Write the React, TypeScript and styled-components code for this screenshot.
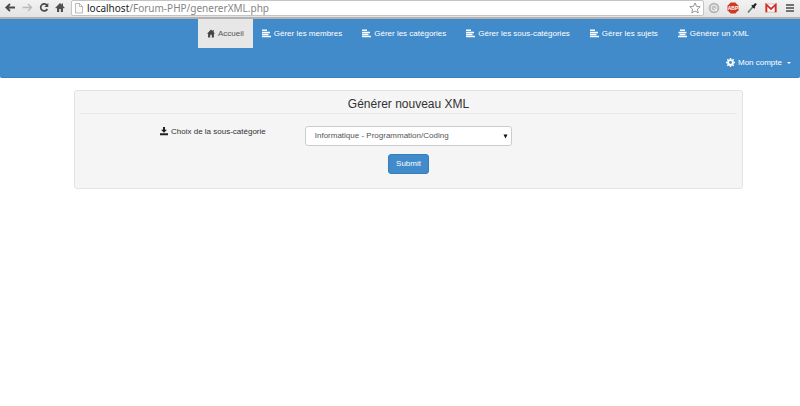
import React from "react";
import styled, { createGlobalStyle } from "styled-components";

const GlobalStyle = createGlobalStyle`
  * { box-sizing: border-box; }
  body {
    margin: 0;
    background: #fff;
    color: #333;
    font: 8px/12px "Liberation Sans", Arial, sans-serif;
  }
  svg { display: block; flex: none; }
`;

const BrowserBar = styled.header`
  display: flex;
  align-items: center;
  height: 19px;
  padding: 0 4px 2px;
  background: linear-gradient(#f2f2f2, #e4e4e4);
  border-bottom: 2px solid #b4b2b0;
`;

const BrowserButtons = styled.div<{ $end?: boolean }>`
  display: flex;
  gap: ${(p) => (p.$end ? "7px" : "4px")};
  padding: ${(p) => (p.$end ? "0 0 0 4px" : "0 5px 0 0")};
`;

const IconButton = styled.button`
  display: flex;
  padding: 0;
  border: 0;
  background: none;
`;

const AddressBox = styled.div`
  display: flex;
  flex: 1;
  align-items: center;
  height: 16px;
  padding: 0 2px;
  gap: 3px;
  background: #fff;
  border: 1px solid #c4c4c4;
  border-radius: 2px;
`;

const Address = styled.div`
  flex: 1;
  color: #858585;
  font: 10px/14px "Noto Sans", "Open Sans", sans-serif;
`;

const Host = styled.span`
  color: #222;
`;

const Navbar = styled.nav`
  padding-right: 8px;
  background: #428bca;
  border-bottom: 1px solid #3a80bf;
  border-radius: 0 0 2px 2px;
`;

const NavList = styled.ul<{ $inset?: boolean }>`
  display: flex;
  justify-content: flex-end;
  margin: 0;
  padding: ${(p) => (p.$inset ? "0 32px 0 0" : "0")};
  list-style: none;
`;

const NavLink = styled.a<{ $active?: boolean }>`
  display: flex;
  align-items: center;
  gap: 3px;
  height: 29px;
  padding: ${(p) => (p.$active ? "0 9px" : "0 11px 0 9px")};
  color: ${(p) => (p.$active ? "#555" : "#fff")};
  background: ${(p) => (p.$active ? "#e7e7e7" : "transparent")};
  text-decoration: none;
  white-space: nowrap;
`;

const AccountLink = styled(NavLink)`
  padding: 0 1px 0 0;
`;

const Caret = styled.span`
  margin-left: 2px;
  border: 2px solid transparent;
  border-top-color: currentColor;
  border-bottom: 0;
`;

const Panel = styled.main`
  margin: 12px 57px 0 74px;
  padding: 5px;
  background: #f5f5f5;
  border: 1px solid #e3e3e3;
  border-radius: 3px;
`;

const Title = styled.h1`
  margin: 0 0 12px;
  padding-bottom: 1px;
  border-bottom: 1px solid #e9e9e9;
  font-size: 12px;
  line-height: 16px;
  font-weight: 400;
  text-align: center;
`;

const Form = styled.form`
  display: flex;
  flex-direction: column;
  gap: 8px;
  padding-bottom: 9px;
`;

const Field = styled.div`
  display: grid;
  grid-template-columns: 13fr 12fr 13fr;
`;

const Label = styled.label`
  display: flex;
  align-items: flex-start;
  justify-content: flex-end;
  gap: 3px;
  padding-right: 39px;
`;

const SelectBox = styled.div`
  display: grid;
  align-items: center;
  background: #fff;
  border: 1px solid #ccc;
  border-radius: 3px;

  > * { grid-area: 1 / 1; }
  > svg { justify-self: end; margin-right: 3px; pointer-events: none; }
`;

const Select = styled.select`
  width: 100%;
  height: 18px;
  padding: 0 9px;
  appearance: none;
  color: #555;
  background: none;
  border: 0;
  font: inherit;
`;

const Submit = styled.button`
  align-self: center;
  height: 20px;
  padding: 0 7px;
  color: #fff;
  background: #428bca;
  border: 1px solid #357ebd;
  border-radius: 3px;
  font: inherit;
`;

const BackIcon = () => (
  <svg width="13" height="13" viewBox="0 0 13 13" fill="none" stroke="#4a4a4a" strokeWidth="1.8">
    <path d="M11 6.500H2.500M6 3 2.300 6.500 6 10" />
  </svg>
);
const ForwardIcon = () => (
  <svg width="13" height="13" viewBox="0 0 13 13" fill="none" stroke="#b9b9b9" strokeWidth="1.3">
    <path d="M1.500 6.500H10.500M7 3l3.500 3.500L7 10" />
  </svg>
);
const ReloadIcon = () => (
  <svg width="12" height="13" viewBox="0 0 12 13">
    <path d="M9 4.400A3.500 3.500 0 1 0 9.300 8" fill="none" stroke="#4a4a4a" strokeWidth="1.700" />
    <path d="M10.300 2v4H6.300z" fill="#4a4a4a" />
  </svg>
);
const BrowserHomeIcon = () => (
  <svg width="12" height="13" viewBox="0 0 12 13" fill="#505050">
    <path d="M6 2 1.300 6.700l.8.800L3 6.700V11h2.200V8h1.600v3H9V6.700l.9.800.8-.8L9 5V2.500H7.700v1.200z" />
  </svg>
);
const PageIcon = () => (
  <svg width="10" height="12" viewBox="0 0 10 12" fill="#fafafa" stroke="#a9a9a9" strokeWidth=".8">
    <path d="M1.500 1.500h4l3 3v6.500h-7zM5.500 1.500v3h3" />
  </svg>
);
const StarIcon = () => (
  <svg width="12" height="12" viewBox="0 0 12 12" fill="#fff" stroke="#8b8b8b" strokeWidth=".9">
    <path d="m6 .9 1.500 3.400 3.700.4-2.800 2.500.8 3.700L6 9 2.800 10.900l.8-3.700L.8 4.700l3.700-.4z" />
  </svg>
);
const SearchBadgeIcon = () => (
  <svg width="12" height="12" viewBox="0 0 12 12">
    <circle cx="6" cy="6" r="5.300" fill="#b5b5b5" />
    <circle cx="6" cy="6" r="3.100" fill="#c4c4c4" stroke="#f2f2f2" strokeWidth="1" />
    <path d="m6 6 3 3" stroke="#f2f2f2" />
  </svg>
);
const BlockIcon = () => (
  <svg width="12" height="12" viewBox="0 0 12 12">
    <path d="M3.700.5h4.600l3.200 3.200v4.600l-3.200 3.200H3.700L.5 8.300V3.700z" fill="#cf3a22" />
    <text x="6" y="8" fill="#fff" fontFamily="Liberation Sans, sans-serif" fontSize="5" fontWeight="700" textAnchor="middle">ABP</text>
  </svg>
);
const PipetteIcon = () => (
  <svg width="12" height="12" viewBox="0 0 12 12">
    <path d="m2 10.500 4.800-5.500" stroke="#62806c" strokeWidth="1.600" />
    <path d="m5.800 3.300 3 3" stroke="#222" strokeWidth="1.300" />
    <path d="m7.300 4.700 2.200-2.400" stroke="#222" strokeWidth="2.200" strokeLinecap="round" />
  </svg>
);
const MailIcon = () => (
  <svg width="12" height="12" viewBox="0 0 12 12">
    <path d="M.5 2h11v8H.5z" fill="#fff" stroke="#d9908c" strokeWidth=".6" />
    <path d="M1.400 10.300V2.700L6 7l4.600-4.300v7.600" fill="none" stroke="#d32f26" strokeWidth="1.800" />
  </svg>
);
const MenuIcon = () => (
  <svg width="12" height="12" viewBox="0 0 12 12" stroke="#4a4a4a" strokeWidth="1.700">
    <path d="M2 3h8M2 6h8M2 9h8" />
  </svg>
);

const HomeIcon = () => (
  <svg width="8" height="9" viewBox="0 0 8 9" fill="#444">
    <path d="M4 .5 0 4.700h1.100V8.500h2.100V5.700h1.600v2.800h2.100V4.700H8L6.700 3.300V1H5.600v1.200z" />
  </svg>
);
const AlignLeftIcon = () => (
  <svg width="9" height="9" viewBox="0 0 9 9" stroke="#fff" strokeWidth="1.5">
    <path d="M0 1.300h5M0 3.400h8M0 5.500h6.500M0 7.600h9" />
  </svg>
);
const AlignCenterIcon = () => (
  <svg width="9" height="9" viewBox="0 0 9 9" stroke="#fff" strokeWidth="1.5">
    <path d="M2 1.300h5M.5 3.400h8M1.500 5.500h6M0 7.600h9" />
  </svg>
);
const CogIcon = () => (
  <svg width="9" height="9" viewBox="0 0 9 9" fill="none" stroke="#fff">
    <circle cx="4.500" cy="4.500" r="2.400" strokeWidth="1.900" />
    <path d="M4.500 0v1.500M4.500 7.500V9M0 4.500h1.500M7.500 4.500H9M1.300 1.300l1 1M6.700 6.700l1 1M1.300 7.700l1-1M6.700 2.300l1-1" strokeWidth="1.500" />
  </svg>
);
const SaveIcon = () => (
  <svg width="8" height="10" viewBox="0 0 8 10" fill="#222">
    <path d="M3 1h2v2.700h2L4 6.700 1 3.700h2zM0 7.200h8v2H0z" />
  </svg>
);
const ArrowIcon = () => (
  <svg width="5" height="5" viewBox="0 0 5 5" fill="#111">
    <path d="M.5.5h4L2.500 4.500z" />
  </svg>
);

const sections = [
  { label: "Gérer les membres", href: "#membres", Icon: AlignLeftIcon },
  { label: "Gérer les catégories", href: "#categories", Icon: AlignLeftIcon },
  { label: "Gérer les sous-catégories", href: "#sous-categories", Icon: AlignLeftIcon },
  { label: "Gérer les sujets", href: "#sujets", Icon: AlignLeftIcon },
  { label: "Générer un XML", href: "#xml", Icon: AlignCenterIcon },
];

export default function App() {
  return (
    <>
      <GlobalStyle />
      <BrowserBar>
        <BrowserButtons>
          <IconButton aria-label="Précédent"><BackIcon /></IconButton>
          <IconButton aria-label="Suivant"><ForwardIcon /></IconButton>
          <IconButton aria-label="Actualiser"><ReloadIcon /></IconButton>
          <IconButton aria-label="Accueil du navigateur"><BrowserHomeIcon /></IconButton>
        </BrowserButtons>
        <AddressBox>
          <PageIcon />
          <Address><Host>localhost</Host>/Forum-PHP/genererXML.php</Address>
          <IconButton aria-label="Favori"><StarIcon /></IconButton>
        </AddressBox>
        <BrowserButtons $end>
          <IconButton aria-label="Recherche"><SearchBadgeIcon /></IconButton>
          <IconButton aria-label="Adblock"><BlockIcon /></IconButton>
          <IconButton aria-label="Pipette"><PipetteIcon /></IconButton>
          <IconButton aria-label="Gmail"><MailIcon /></IconButton>
          <IconButton aria-label="Menu"><MenuIcon /></IconButton>
        </BrowserButtons>
      </BrowserBar>
      <Navbar>
        <NavList $inset>
          <li><NavLink href="#accueil" $active><HomeIcon />Accueil</NavLink></li>
          {sections.map(({ label, href, Icon }) => (
            <li key={label}><NavLink href={href}><Icon />{label}</NavLink></li>
          ))}
        </NavList>
        <NavList>
          <li><AccountLink href="#compte"><CogIcon />Mon compte <Caret /></AccountLink></li>
        </NavList>
      </Navbar>
      <Panel>
        <Title>Générer nouveau XML</Title>
        <Form onSubmit={(e) => e.preventDefault()}>
          <Field>
            <Label htmlFor="category"><SaveIcon />Choix de la sous-catégorie</Label>
            <SelectBox>
              <Select id="category">
                <option>Informatique - Programmation/Coding</option>
              </Select>
              <ArrowIcon />
            </SelectBox>
          </Field>
          <Submit type="submit">Submit</Submit>
        </Form>
      </Panel>
    </>
  );
}
